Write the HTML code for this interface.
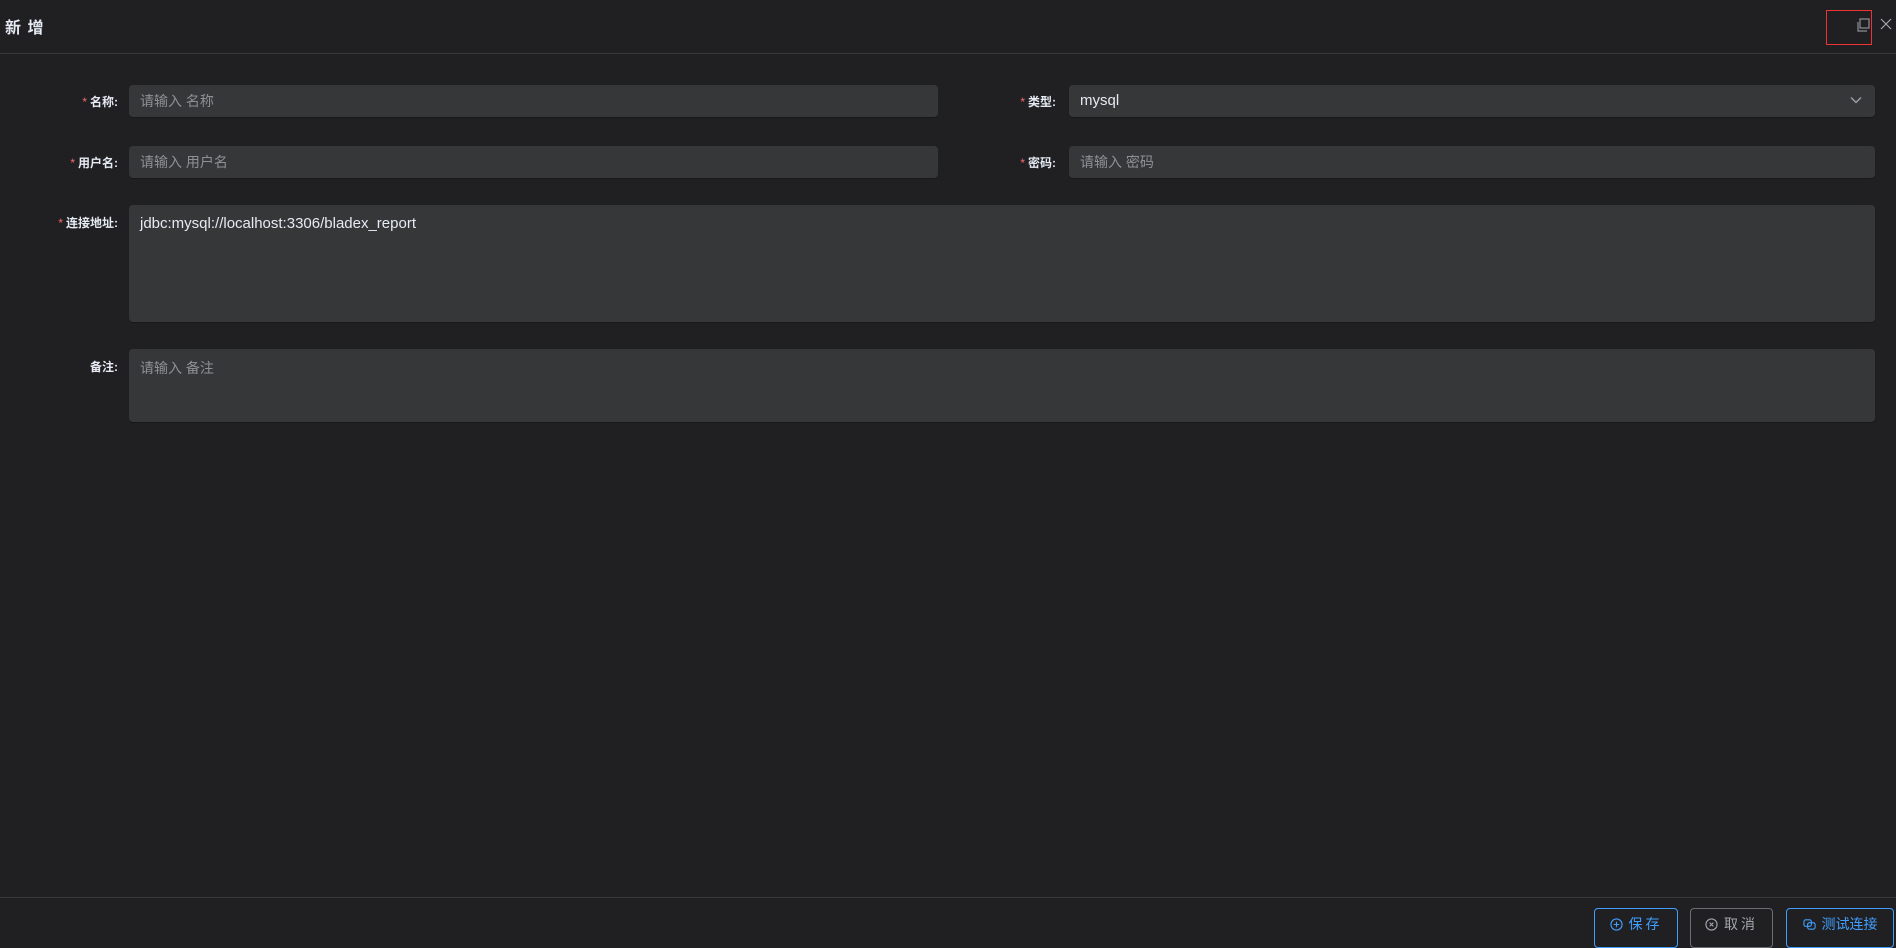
<!DOCTYPE html>
<html><head><meta charset="utf-8"><style>
*{box-sizing:border-box;margin:0;padding:0}
body{width:1896px;height:934px;background:#202023;font-family:"Liberation Sans","Noto Sans CJK SC",sans-serif;position:relative;overflow:hidden;color:#e5eaf3}
.abs{position:absolute}
.title{left:5px;top:14px;font-size:16px;font-weight:bold;color:#e5eaf3;letter-spacing:1px}
.hline{left:0;width:1896px;height:1px;background:#38383b}
.lbl{font-size:12px;font-weight:bold;color:#e5eaf3;text-align:right;width:110px;white-space:nowrap}
.lbl b{color:#f56c6c;font-weight:normal;margin-right:3px}
.inp{background:#363739;border-radius:4px;box-shadow:0 1px 0 #18181a;font-size:14px;color:#8d9095;padding-left:11px;line-height:32px}
.btn{top:908px;height:40px;border:1px solid #409eff;border-radius:4px;color:#409eff;font-size:14px;line-height:30px;text-align:center;letter-spacing:3px;display:flex;justify-content:center;align-items:flex-start;padding-top:0}
.btn svg{margin-top:9px;margin-right:6px}
</style></head><body>
<div class="abs title">新 增</div>
<div class="abs" style="left:1826px;top:10px;width:46px;height:35px;border:1px solid #e33"></div>
<svg class="abs" style="left:1856px;top:18px" width="14" height="14" viewBox="0 0 14 14" fill="none" stroke="#8d9095" stroke-width="1.2"><rect x="4" y="1" width="9" height="9"/><path d="M2 4v9h9"/></svg>
<svg class="abs" style="left:1880px;top:18px" width="12" height="12" viewBox="0 0 12 12" stroke="#a3a6ad" stroke-width="1.2"><path d="M1 1l10 10M11 1L1 11"/></svg>
<div class="abs hline" style="top:53px"></div>

<div class="abs lbl" style="left:8px;top:93px"><b>*</b>名称:</div>
<div class="abs inp" style="left:129px;top:85px;width:809px;height:32px">请输入 名称</div>
<div class="abs lbl" style="left:946px;top:93px"><b>*</b>类型:</div>
<div class="abs inp" style="left:1069px;top:85px;width:806px;height:32px;color:#e5eaf3;font-size:15px">mysql</div>
<svg class="abs" style="left:1850px;top:96px" width="12" height="8" viewBox="0 0 12 8" fill="none" stroke="#a3a6ad" stroke-width="1.3"><path d="M1 1.5l5 5 5-5"/></svg>

<div class="abs lbl" style="left:8px;top:154px"><b>*</b>用户名:</div>
<div class="abs inp" style="left:129px;top:146px;width:809px;height:32px">请输入 用户名</div>
<div class="abs lbl" style="left:946px;top:154px"><b>*</b>密码:</div>
<div class="abs inp" style="left:1069px;top:146px;width:806px;height:32px">请输入 密码</div>

<div class="abs lbl" style="left:8px;top:214px"><b>*</b>连接地址:</div>
<div class="abs inp" style="left:129px;top:205px;width:1746px;height:117px;color:#e5eaf3;font-size:15px"><span style="position:absolute;left:11px;top:3px">jdbc:mysql://localhost:3306/bladex_report</span></div>
<div class="abs lbl" style="left:8px;top:358px">备注:</div>
<div class="abs inp" style="left:129px;top:349px;width:1746px;height:73px"><span style="position:absolute;left:11px;top:3px">请输入 备注</span></div>

<div class="abs hline" style="top:897px"></div>
<div class="abs btn" style="left:1594px;width:84px"><svg width="13" height="13" viewBox="0 0 14 14" fill="none" stroke="#409eff" stroke-width="1.2"><circle cx="7" cy="7" r="6"/><path d="M7 4v6M4 7h6"/></svg>保存</div>
<div class="abs btn" style="left:1690px;width:83px;border-color:#6b6d71;color:#a3a6ad"><svg width="13" height="13" viewBox="0 0 14 14" fill="none" stroke="#a3a6ad" stroke-width="1.2"><circle cx="7" cy="7" r="6"/><path d="M5 5l4 4M9 5l-4 4"/></svg>取消</div>
<div class="abs btn" style="left:1786px;width:108px;letter-spacing:0"><svg width="13" height="13" viewBox="0 0 14 14" fill="none" stroke="#409eff" stroke-width="1.2"><rect x="1" y="2" width="8" height="7" rx="2"/><rect x="5" y="5" width="8" height="7" rx="2"/></svg>测试连接</div>
</body></html>
